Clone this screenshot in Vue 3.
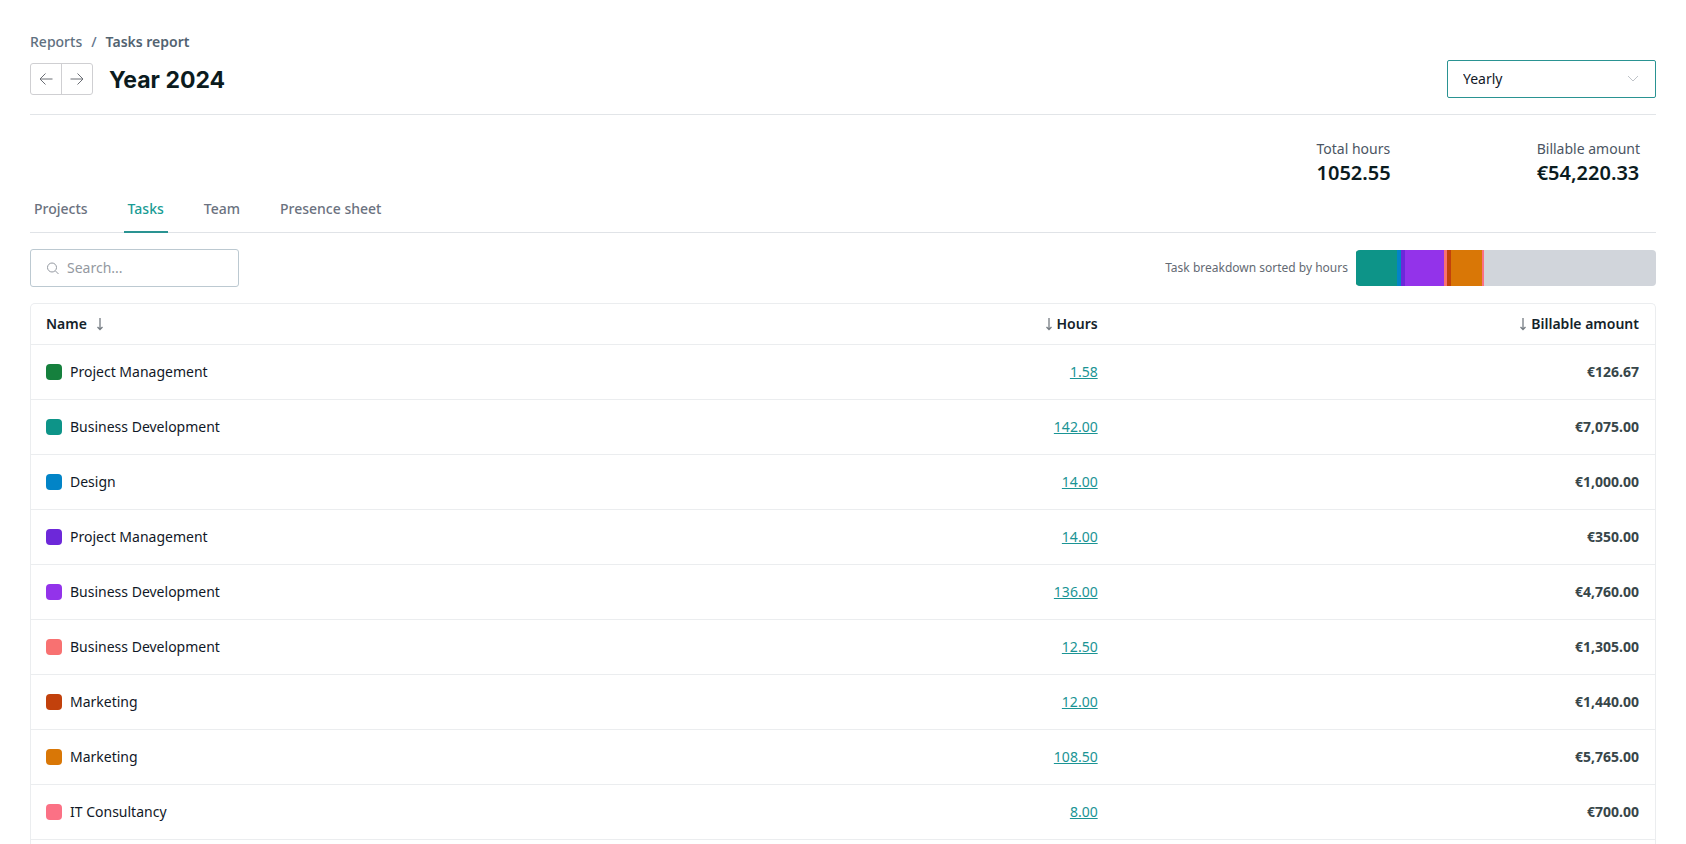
<script setup>
import { ref, computed } from 'vue'

const period = ref('Yearly')
const query = ref('')
const totalHours = 1052.55

const tabs = ['Projects', 'Tasks', 'Team', 'Presence sheet']
const activeTab = ref('Tasks')

const tasks = [
  { name: 'Project Management', hours: 1.58, amount: '€126.67', color: '#15803d' },
  { name: 'Business Development', hours: 142, amount: '€7,075.00', color: '#0d9488' },
  { name: 'Design', hours: 14, amount: '€1,000.00', color: '#0284c7' },
  { name: 'Project Management', hours: 14, amount: '€350.00', color: '#6d28d9' },
  { name: 'Business Development', hours: 136, amount: '€4,760.00', color: '#9333ea' },
  { name: 'Business Development', hours: 12.5, amount: '€1,305.00', color: '#f87171' },
  { name: 'Marketing', hours: 12, amount: '€1,440.00', color: '#c2410c' },
  { name: 'Marketing', hours: 108.5, amount: '€5,765.00', color: '#d97706' },
  { name: 'IT Consultancy', hours: 8, amount: '€700.00', color: '#fb7185' },
]

const visibleTasks = computed(() =>
  tasks.filter((t) => t.name.toLowerCase().includes(query.value.toLowerCase()))
)
const share = (t) => `${(t.hours / totalHours) * 100}%`
</script>

<template>
  <main class="page">
    <nav class="breadcrumb" aria-label="Breadcrumb">
      <a href="#reports">Reports</a>
      <span class="slash">/</span>
      <a href="#tasks" class="current">Tasks report</a>
    </nav>

    <header class="header">
      <div class="pager">
        <button type="button" aria-label="Previous year">
          <svg width="16" height="16" viewBox="0 0 16 16"><path d="M14.5 8H2M7.5 2.5L2 8l5.500 5.500" /></svg>
        </button>
        <button type="button" aria-label="Next year">
          <svg width="16" height="16" viewBox="0 0 16 16"><path d="M1.500 8H14M8.500 2.500L14 8l-5.500 5.500" /></svg>
        </button>
      </div>
      <h1>Year 2024</h1>
      <div class="select">
        <select v-model="period" aria-label="Period">
          <option>Yearly</option>
          <option>Monthly</option>
          <option>Weekly</option>
        </select>
        <svg width="12" height="12" viewBox="0 0 12 12"><path d="M1 3l5 5 5-5" /></svg>
      </div>
    </header>

    <dl class="stats">
      <div>
        <dt>Total hours</dt>
        <dd>1052.55</dd>
      </div>
      <div>
        <dt>Billable amount</dt>
        <dd>€54,220.33</dd>
      </div>
    </dl>

    <nav class="tabs" aria-label="Report sections">
      <button
        v-for="tab in tabs"
        :key="tab"
        type="button"
        :class="{ active: tab === activeTab }"
        @click="activeTab = tab"
      >{{ tab }}</button>
    </nav>

    <section class="toolbar">
      <label class="search">
        <svg width="14" height="14" viewBox="0 0 14 14"><circle cx="6" cy="6.500" r="4.500" /><path d="M9.500 10l3 3" /></svg>
        <input v-model="query" type="text" placeholder="Search..." aria-label="Search tasks" />
      </label>
      <div class="breakdown">
        <span>Task breakdown sorted by hours</span>
        <div class="bar">
          <i v-for="(t, i) in tasks" :key="i" :style="{ width: share(t), background: t.color }"></i>
        </div>
      </div>
    </section>

    <div class="table-wrap">
      <table>
        <thead>
          <tr>
            <th scope="col">
              <button type="button" class="sort name">Name
                <svg width="8" height="14" viewBox="0 0 8 14"><path d="M4 1v11M1.500 10L4 12.500 6.500 10" /></svg>
              </button>
            </th>
            <th scope="col" class="num">
              <button type="button" class="sort">
                <svg width="8" height="14" viewBox="0 0 8 14"><path d="M4 1v11M1.500 10L4 12.500 6.500 10" /></svg>Hours
              </button>
            </th>
            <th scope="col" class="num">
              <button type="button" class="sort">
                <svg width="8" height="14" viewBox="0 0 8 14"><path d="M4 1v11M1.500 10L4 12.500 6.500 10" /></svg>Billable amount
              </button>
            </th>
          </tr>
        </thead>
        <tbody>
          <tr v-for="(t, i) in visibleTasks" :key="i">
            <td>
              <div class="task"><span class="swatch" :style="{ background: t.color }"></span>{{ t.name }}</div>
            </td>
            <td class="num"><a href="#hours">{{ t.hours.toFixed(2) }}</a></td>
            <td class="num amount">{{ t.amount }}</td>
          </tr>
        </tbody>
      </table>
    </div>
  </main>
</template>

<style>
body {
  margin: 0;
  background: #fff;
}
</style>

<style scoped>
* {
  box-sizing: border-box;
}
.page {
  display: flex;
  flex-direction: column;
  min-height: 100vh;
  padding: 32px 30px 0;
  font: 14px/20px "Noto Sans", sans-serif;
  color: #111827;
}
button,
input,
select {
  font: inherit;
  color: inherit;
  margin: 0;
}
button {
  padding: 0;
  border: 0;
  background: none;
  cursor: pointer;
}
svg {
  display: block;
  flex: none;
  fill: none;
  stroke: currentColor;
}
.breadcrumb {
  display: flex;
  gap: 9px;
  font-weight: 500;
  color: #64748b;
}
.breadcrumb a {
  color: #5f7080;
  text-decoration: none;
}
.breadcrumb .current {
  font-weight: 600;
  color: #526371;
}
.header {
  display: flex;
  align-items: center;
  padding: 8px 0 16px;
  border-bottom: 1px solid #e2e5e8;
}
.pager {
  display: flex;
  border: 1px solid #cfcfd2;
  border-radius: 3px;
}
.pager button {
  display: flex;
  align-items: center;
  justify-content: center;
  width: 30px;
  height: 30px;
  color: #6b6e75;
}
.pager button + button {
  width: 31px;
  border-left: 1px solid #cfcfd2;
}
h1 {
  margin: 0 auto 0 16px;
  padding-top: 2px;
  font: 700 23px/32px Inter, sans-serif;
  color: #0b1b1e;
}
.select {
  display: grid;
  align-items: center;
  width: 209px;
}
.select select,
.select svg {
  grid-area: 1 / 1;
}
.select select {
  appearance: none;
  height: 38px;
  padding: 0 15px;
  border: 1px solid #2a9392;
  border-radius: 2px;
  background: #fff;
  outline: 0;
}
.select svg {
  justify-self: end;
  margin-right: 17px;
  color: #bfc3c8;
  pointer-events: none;
}
.stats {
  display: flex;
  justify-content: flex-end;
  gap: 146px;
  margin: 0;
  padding: 24px 16px 0;
}
dt {
  color: #4b5563;
}
dd {
  margin: 0;
  font-size: 20px;
  line-height: 28px;
  font-weight: 600;
  color: #0b1b1e;
}
.tabs {
  display: flex;
  gap: 32px;
  margin-top: 12px;
  border-bottom: 1px solid #e0e3e7;
}
.tabs button {
  height: 34px;
  margin-bottom: -1px;
  padding: 0 4px 12px;
  border-bottom: 2px solid transparent;
  font-weight: 500;
  color: #6b7280;
}
.tabs .active {
  border-color: #2a9392;
  color: #1a9c94;
}
.toolbar {
  display: flex;
  align-items: center;
  justify-content: space-between;
  margin: 16px 0;
}
.search {
  display: flex;
  align-items: center;
  gap: 7px;
  width: 209px;
  height: 38px;
  padding: 0 15px;
  border: 1px solid #bcc9d1;
  border-radius: 3px;
  color: #9499a1;
}
.search input {
  flex: 1;
  min-width: 0;
  padding: 0;
  border: 0;
  outline: 0;
  background: none;
  color: #111827;
}
.search input::placeholder {
  color: #9499a1;
  opacity: 1;
}
.breakdown {
  display: flex;
  align-items: center;
  gap: 8px;
  font-size: 12px;
  color: #646a73;
}
.bar {
  display: flex;
  width: 300px;
  height: 36px;
  border-radius: 4px;
  overflow: hidden;
  background: #d1d5db;
}
.table-wrap {
  flex: 1;
  border: 1px solid #ebedef;
  border-bottom: 0;
  border-radius: 5px 5px 0 0;
}
table {
  width: 100%;
  table-layout: fixed;
  border-collapse: separate;
  border-spacing: 0;
}
th,
td {
  padding: 0 15px;
  border-bottom: 1px solid #ebedef;
  text-align: left;
  vertical-align: middle;
}
th {
  height: 41px;
  padding-bottom: 2px;
  font-weight: 600;
  color: #14232a;
}
td {
  height: 55px;
}
th.num,
td.num {
  padding-right: 16px;
  text-align: right;
}
.sort {
  display: inline-flex;
  align-items: center;
  gap: 4px;
  vertical-align: middle;
}
.sort.name {
  gap: 9px;
}
.sort svg {
  color: #767c83;
  stroke-width: 1.3;
}
.task {
  display: flex;
  align-items: center;
  gap: 8px;
}
.swatch {
  width: 16px;
  height: 16px;
  border-radius: 4px;
}
td a {
  color: #1a9494;
  text-decoration: underline;
  text-underline-offset: 1px;
}
.amount {
  font-weight: 700;
  color: #374649;
}
</style>
